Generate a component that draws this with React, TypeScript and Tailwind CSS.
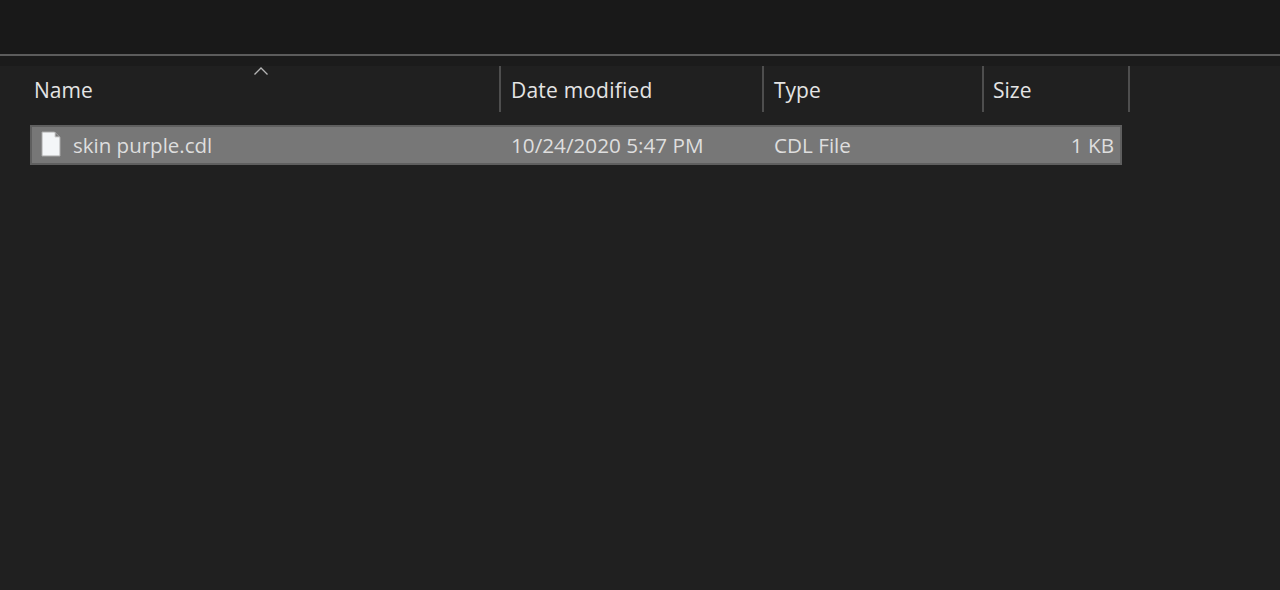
import React from 'react';

const FileIcon = () => (
  <svg width="20" height="26" viewBox="0 0 20 26" className="shrink-0">
    <path d="M1 1h12.5L19 6.5V25H1z" fill="#f4f6f8" stroke="#a9a9a9" strokeWidth="1" />
    <path d="M14 1.5V6h4.5" fill="#7a7a7a" stroke="#d0d0d0" strokeWidth="1" />
  </svg>
);

const App: React.FC = () => {
  return (
    <div className="h-[590px] w-[1280px] overflow-hidden bg-[#202020] font-['Open_Sans',sans-serif] text-[#e4e4e4]">
      {/* Toolbar edge */}
      <div className="h-[54px] bg-[#191919]" />
      <div className="h-[2px] bg-[#5c5c5c]" />
      <div className="h-[10px] bg-[#1b1b1b]" />

      {/* Column headers */}
      <div className="flex h-[46px] w-[1130px] items-center text-[21px]">
        <div className="relative flex h-full w-[501px] items-center border-r-2 border-[#4e4e4e] pl-[34px] pt-[3px]">
          <svg width="16" height="10" viewBox="0 0 16 10" fill="none" className="absolute left-[253px] top-0 text-[#b5b5b5]">
            <path d="M1.5 8.5 8 2l6.5 6.5" stroke="currentColor" strokeWidth="1.3" />
          </svg>
          Name
        </div>
        <div className="flex h-full w-[263px] items-center border-r-2 border-[#4e4e4e] pl-[10px] pt-[3px] tracking-[0.2px]">Date modified</div>
        <div className="flex h-full w-[220px] items-center border-r-2 border-[#4e4e4e] pl-[10px] pt-[3px]">Type</div>
        <div className="flex h-full w-[146px] items-center border-r-2 border-[#4e4e4e] pl-[9px] pt-[3px]">Size</div>
      </div>

      {/* Selected row */}
      <div className="ml-[30px] mt-[13px] flex h-[40px] w-[1092px] items-center border-2 border-[#5f5f5f] bg-[#777777] text-[20.7px] text-[#dedede]">
        <div className="flex w-[468px] items-center pl-[9px]">
          <div className="-mt-[3px]"><FileIcon /></div>
          <span className="ml-[12px] text-[20.5px]">skin purple.cdl</span>
        </div>
        <div className="w-[263px] pl-[11px] pt-[2px]">10/24/2020 5:47 PM</div>
        <div className="w-[220px] pl-[11px] pt-[2px]">CDL File</div>
        <div className="flex-1 pr-[6px] pt-[2px] text-right">1 KB</div>
      </div>
    </div>
  );
};

export default App;
